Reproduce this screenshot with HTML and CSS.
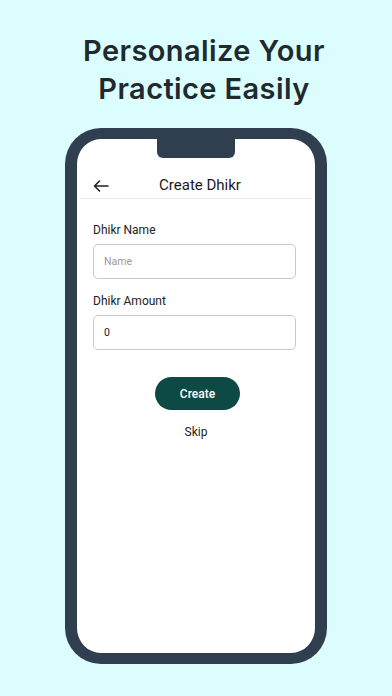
FILE: index.html
```html
<!DOCTYPE html>
<html lang="en">
<head>
    <meta charset="UTF-8">
    <meta name="viewport" content="width=device-width, initial-scale=1.0">
    <title>Personalize Your Practice Easily</title>
    <link rel="stylesheet" href="styles.css">
</head>
<body>
    <h1 class="Title">Personalize Your<br>Practice Easily</h1>

    <div class="phone">
        <div class="notch"></div>
        <div class="screen">
            <div class="app-bar">
                <span class="back-button">
                    <svg width="16" height="12" viewBox="0 0 16 12" fill="none" stroke="#222" stroke-width="1.6" stroke-linecap="round" stroke-linejoin="round">
                        <path d="M15 6H1.5M6.5 1L1.5 6l5 5"/>
                    </svg>
                </span>
                <span class="app-title">Create Dhikr</span>
            </div>

            <form class="dhikr-form">
                <label class="field-label" for="dhikrName">Dhikr Name</label>
                <input type="text" id="dhikrName" class="field-input" placeholder="Name">

                <label class="field-label" for="dhikrAmount">Dhikr Amount</label>
                <input type="text" id="dhikrAmount" class="field-input" value="0">

                <button type="button" class="create-button">Create</button>
                <span class="skip-link">Skip</span>
            </form>
        </div>
    </div>
</body>
</html>
```

FILE: styles.css
```css
body {
    background-color: #dcfdfd;
    font-family: 'Roboto', sans-serif;
    color: #222;
    margin: 0;
    padding: 0;
}

h1.Title {
    font-family: 'Inter', sans-serif;
    font-size: 29px;
    font-weight: 600;
    line-height: 38px;
    letter-spacing: 0.4px;
    text-align: center;
    color: #1f2a2f;
    margin: 0;
    padding: 32px 0 0 16px;
}

.phone {
    position: relative;
    width: 262px;
    height: 536px;
    box-sizing: border-box;
    margin: 20px 0 0 65px;
    border: 11px solid #2f3f4f;
    border-width: 11px 12px;
    border-radius: 36px;
    background: #ffffff;
}

.notch {
    position: absolute;
    top: -1px;
    left: 80px;
    width: 78px;
    height: 20px;
    background: #2f3f4f;
    border-radius: 0 0 6px 6px;
}

.screen {
    padding-top: 37px;
}

.app-bar {
    position: relative;
    height: 22px;
    margin: 0 3px;
    border-bottom: 1px solid #ececec;
    display: flex;
    align-items: flex-start;
    justify-content: center;
}

.back-button {
    position: absolute;
    left: 13px;
    top: 1px;
}

.app-title {
    font-size: 15px;
    font-weight: 400;
    line-height: 18px;
    color: #1a1a1a;
    margin-left: 8px;
}

.dhikr-form {
    display: flex;
    flex-direction: column;
    padding: 23px 19px 0 16px;
}

.field-label {
    font-size: 12px;
    line-height: 16px;
    color: #222;
    margin-bottom: 6px;
}

.field-input {
    height: 35px;
    box-sizing: border-box;
    border: 1px solid #c9c9c9;
    border-radius: 5px;
    padding: 0 10px;
    font-family: 'Roboto', sans-serif;
    font-size: 10.5px;
    color: #222;
    outline: none;
    margin-bottom: 14px;
}

.field-input::placeholder {
    color: #9a9a9a;
}

.create-button {
    align-self: center;
    width: 85px;
    height: 33px;
    margin-top: 13px;
    margin-left: 6px;
    border: none;
    border-radius: 17px;
    background: #0d4a45;
    color: #ffffff;
    font-family: 'Roboto', sans-serif;
    font-size: 12px;
    font-weight: 500;
}

.skip-link {
    align-self: center;
    margin-left: 3px;
    margin-top: 14px;
    font-size: 12px;
    line-height: 16px;
    color: #222;
}
```
